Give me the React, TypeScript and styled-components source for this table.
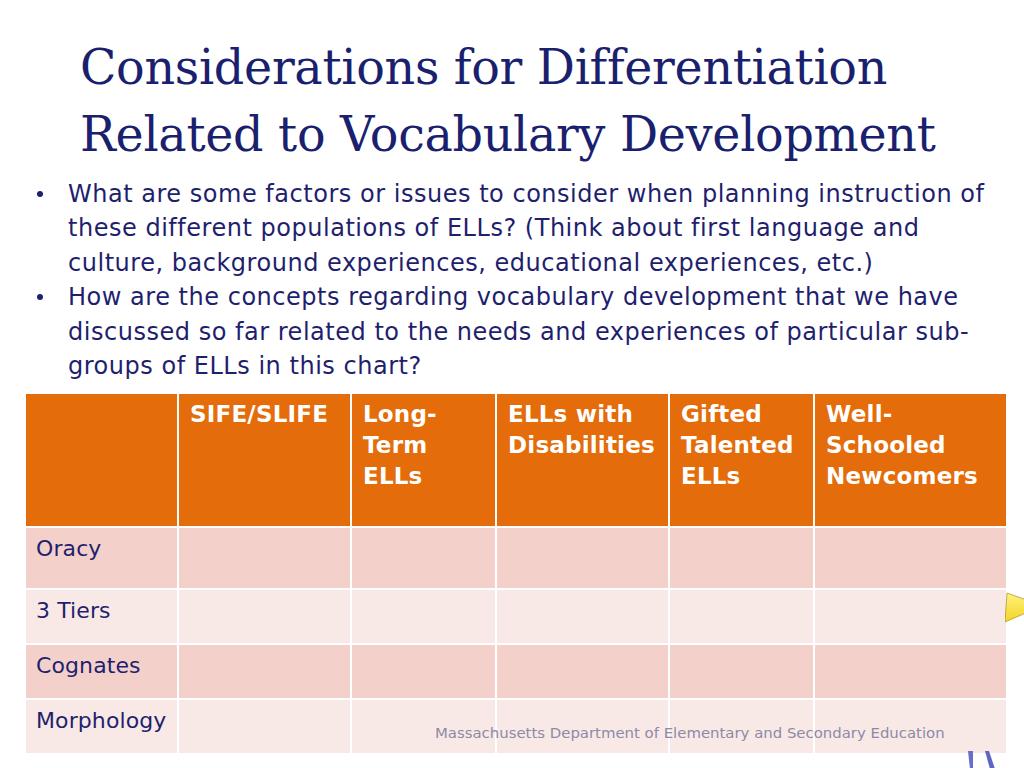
import React from "react";
import styled, { createGlobalStyle } from "styled-components";

const GlobalStyle = createGlobalStyle`
  html, body {
    margin: 0;
    padding: 0;
    background: #ffffff;
  }
  body {
    font-family: "DejaVu Sans", Verdana, sans-serif;
  }
`;

const columns = [
  "",
  "SIFE/SLIFE",
  "Long-\nTerm\nELLs",
  "ELLs with\nDisabilities",
  "Gifted\nTalented\nELLs",
  "Well-\nSchooled\nNewcomers",
];

const rows = [
  { label: "Oracy", height: 60 },
  { label: "3 Tiers", height: 53 },
  { label: "Cognates", height: 53 },
  { label: "Morphology", height: 53 },
];

export default function App() {
  return (
    <>
      <GlobalStyle />
      <Slide>
        <Title>
          Considerations for Differentiation
          <br />
          Related to Vocabulary Development
        </Title>
        <Bullets>
          <li>
            What are some factors or issues to consider when planning instruction of
            <br />
            these different populations of ELLs? (Think about first language and
            <br />
            culture, background experiences, educational experiences, etc.)
          </li>
          <li>
            How are the concepts regarding vocabulary development that we have
            <br />
            discussed so far related to the needs and experiences of particular sub-
            <br />
            groups of ELLs in this chart?
          </li>
        </Bullets>
        <Table>
          {columns.map((c, i) => (
            <HeadCell key={i}>{c}</HeadCell>
          ))}
          {rows.map((r, ri) =>
            columns.map((_, ci) => (
              <BodyCell key={ri + "-" + ci} $alt={ri % 2 === 1} $h={r.height}>
                {ci === 0 ? r.label : ""}
              </BodyCell>
            ))
          )}
        </Table>
        <Footer>Massachusetts Department of Elementary and Secondary Education</Footer>
        <Arrow viewBox="0 0 30 32" aria-hidden>
          <defs>
            <linearGradient id="yel" x1="0" y1="0" x2="0" y2="1">
              <stop offset="0" stopColor="#fff27e" />
              <stop offset="1" stopColor="#f5d424" />
            </linearGradient>
          </defs>
          <polygon points="2,1 30,11 30,17 0,30" fill="url(#yel)" stroke="#a99a3a" strokeWidth="0.8" />
        </Arrow>
        <Figure viewBox="0 0 30 18" aria-hidden>
          <path d="M1 0 L6 0 L6 18 L3 18 Z" fill="#6670c8" />
          <path d="M18 0 L22 0 L28 18 L23 18 Z" fill="#5d66c0" />
        </Figure>
      </Slide>
    </>
  );
}

const Slide = styled.div`
  position: relative;
  width: 1024px;
  height: 768px;
  overflow: hidden;
  background: #ffffff;
`;

const Title = styled.h1`
  margin: 0;
  padding: 34px 0 0 80px;
  font-family: "DejaVu Serif", Georgia, serif;
  font-weight: normal;
  font-size: 47.6px;
  line-height: 67px;
  color: #1a1f6e;
  letter-spacing: -0.3px;
`;

const Bullets = styled.ul`
  margin: 9px 0 0 0;
  padding: 0 0 0 68px;
  list-style: none;
  font-size: 24px;
  line-height: 34.4px;
  color: #1f1f6e;
  letter-spacing: 0.52px;
  li {
    position: relative;
    white-space: nowrap;
  }
  li::before {
    content: "";
    position: absolute;
    left: -31px;
    top: 14px;
    width: 6px;
    height: 6px;
    border-radius: 50%;
    background: #1f1f6e;
  }
`;

const Table = styled.div`
  display: grid;
  grid-template-columns: 151px 171px 143px 171px 143px 191px;
  gap: 2px;
  width: 980px;
  margin: 11px 0 0 26px;
  background: #ffffff;
`;

const HeadCell = styled.div`
  height: 132px;
  box-sizing: border-box;
  padding: 5px 0 0 11px;
  background: #e46c0a;
  color: #ffffff;
  font-weight: bold;
  font-size: 23px;
  line-height: 31px;
  white-space: pre-line;
  letter-spacing: 0.2px;
`;

const BodyCell = styled.div<{ $alt: boolean; $h: number }>`
  height: ${(p) => p.$h}px;
  box-sizing: border-box;
  padding: 6px 0 0 10px;
  background: ${(p) => (p.$alt ? "#f9e9e6" : "#f3d1ca")};
  color: #1f1f6e;
  font-size: 22px;
  line-height: 30px;
  letter-spacing: 0.1px;
`;

const Footer = styled.div`
  position: absolute;
  left: 435px;
  top: 724px;
  font-size: 14.9px;
  color: #8d8aa6;
`;

const Arrow = styled.svg`
  position: absolute;
  left: 1005px;
  top: 592px;
  width: 30px;
  height: 32px;
`;

const Figure = styled.svg`
  position: absolute;
  left: 967px;
  top: 751px;
  width: 30px;
  height: 18px;
`;
